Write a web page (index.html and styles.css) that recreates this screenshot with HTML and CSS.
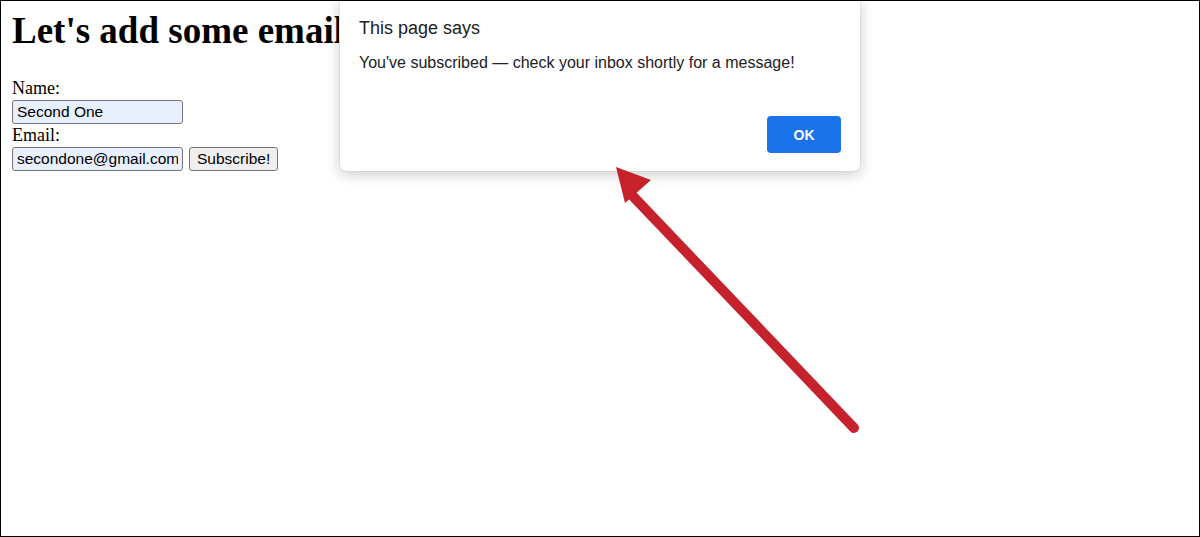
FILE: index.html
```html
<!doctype html>
<html lang="en">

<head>
  <meta charset="UTF-8" />
  <meta name="viewport" content="width=device-width, initial-scale=1.0" />
  <title>Subscribe</title>
  <link rel="stylesheet" href="styles.css">
</head>

<body>
  <div class="frame">
    <div class="page">
      <h1 class="title"> Let's add some emails! </h1>

      <form class="form">
        <label class="label" for="input-name"> Name: </label>
        <div class="row">
          <input id="input-name" class="input" type="text" value="Second One" />
        </div>
        <label class="label" for="input-email"> Email: </label>
        <div class="row">
          <input id="input-email" class="input" type="text" value="secondone@gmail.com" />
          <button type="button" class="btn"> Subscribe! </button>
        </div>
      </form>
    </div>

    <div class="dialog">
      <div class="dialog-title"> This page says </div>
      <div class="dialog-message"> You've subscribed — check your inbox shortly for a message! </div>
      <div class="dialog-actions">
        <div class="btn-ok"> OK </div>
      </div>
    </div>

    <svg class="arrow" width="1200" height="537" viewBox="0 0 1200 537">
      <line x1="854" y1="428" x2="628" y2="191" stroke="#c6222b" stroke-width="10" stroke-linecap="round" />
      <polygon points="616,167 651,180 625,203" fill="#c6222b" />
    </svg>
  </div>
</body>

</html>
```

FILE: styles.css
```css
html,
body {
  margin: 0px;
  padding: 0px;
  background-color: #FFFFFF;
}

.frame {
  position: relative;
  box-sizing: border-box;
  width: 1200px;
  height: 537px;
  border: 1px solid #000000;
  overflow: hidden;
}

.page {
  padding: 8px 11px;
  font-family: "Liberation Serif", serif;
  color: #000000;
}

/* the alert covers the end of the heading */
.title {
  width: 327px;
  overflow: hidden;
  margin: 0px 0px 24px 0px;
  font-size: 37px;
  line-height: 44px;
  font-weight: bold;
  white-space: nowrap;
}

.form {
  display: flex;
  flex-direction: column;
  align-items: flex-start;
}

.label {
  font-size: 18px;
  line-height: 23px;
}

.row {
  display: flex;
  gap: 6px;
}

.input {
  box-sizing: border-box;
  width: 171px;
  height: 24px;
  margin: 0px;
  padding: 1px 4px;
  font-family: "Liberation Sans", Arial, sans-serif;
  font-size: 15.5px;
  color: #000000;
  background-color: #e8f0fe;
  border: 1px solid #767676;
  border-radius: 3px;
}

.btn {
  box-sizing: border-box;
  height: 24px;
  margin: 0px;
  padding: 1px 7px;
  font-family: "Liberation Sans", Arial, sans-serif;
  font-size: 15.5px;
  color: #000000;
  background-color: #efefef;
  border: 1px solid #767676;
  border-radius: 3px;
}

/* alert dialog */

.dialog {
  position: absolute;
  top: -1px;
  left: 339px;
  box-sizing: border-box;
  width: 520px;
  height: 171px;
  padding: 18px 19px 18px 19px;
  background-color: #FFFFFF;
  border-radius: 0px 0px 6px 6px;
  box-shadow: 0px 3px 14px rgba(0, 0, 0, 0.22), 0px 0px 1px rgba(0, 0, 0, 0.3);
  font-family: "Liberation Sans", Arial, sans-serif;
  color: #202124;
  display: flex;
  flex-direction: column;
}

.dialog-title {
  font-size: 18px;
  line-height: 20px;
}

.dialog-message {
  margin-top: 16px;
  font-size: 16px;
  line-height: 18px;
}

.dialog-actions {
  margin-top: auto;
  display: flex;
  justify-content: flex-end;
}

.btn-ok {
  width: 74px;
  height: 37px;
  display: flex;
  align-items: center;
  justify-content: center;
  background-color: #1a73e8;
  color: #FFFFFF;
  border-radius: 4px;
  font-size: 14px;
  font-weight: bold;
}

.arrow {
  position: absolute;
  top: -1px;
  left: -1px;
  pointer-events: none;
}
```
